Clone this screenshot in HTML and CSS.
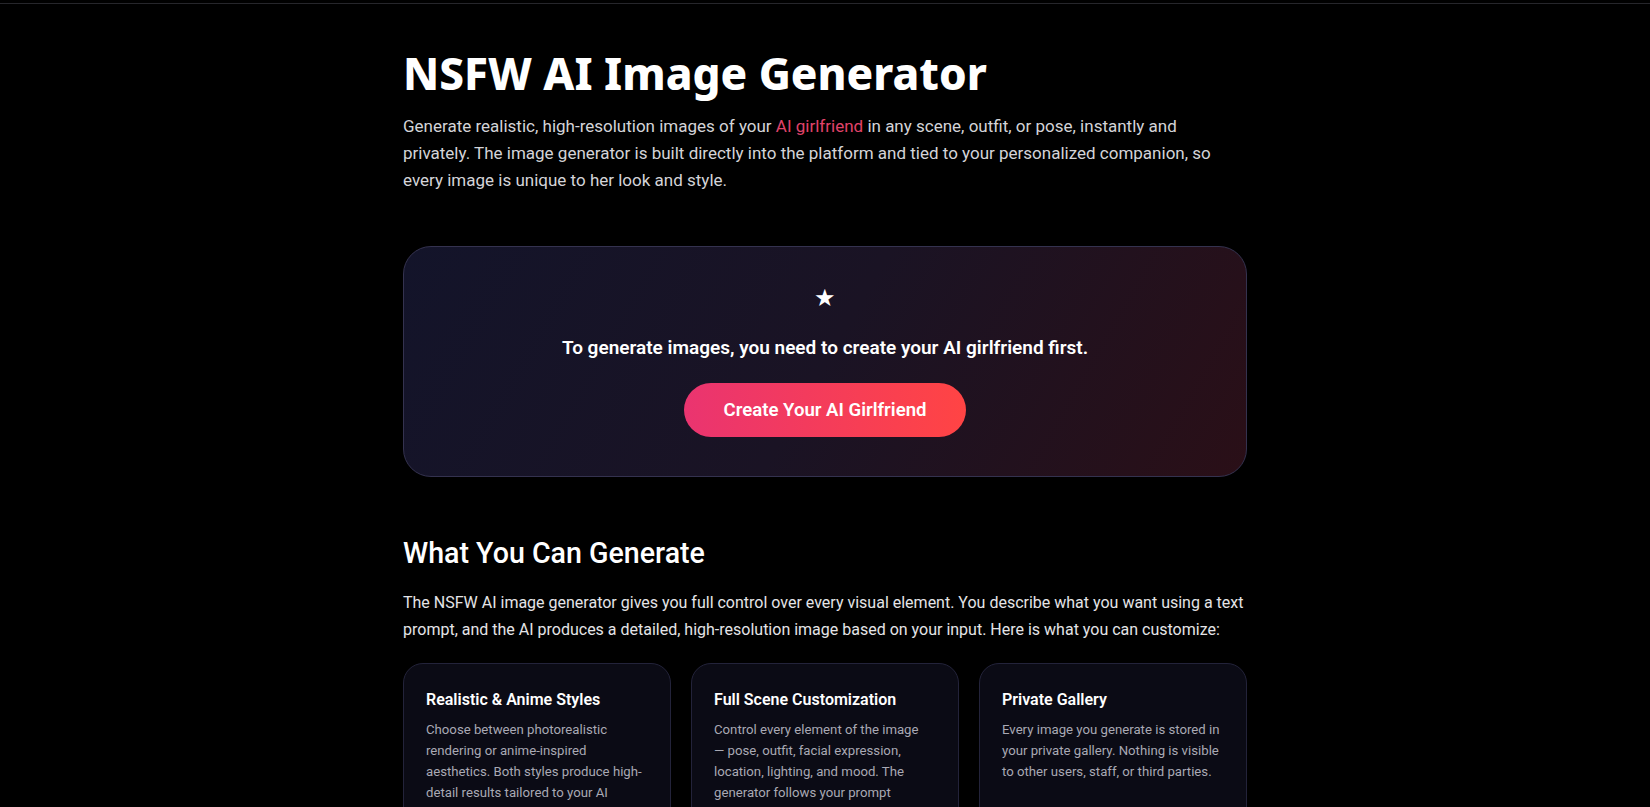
FILE: index.html
```html
<!DOCTYPE html>
<html lang="en">
<head>
<meta charset="utf-8">
<title>NSFW AI Image Generator</title>
<link rel="stylesheet" href="styles.css">
</head>
<body>
<div class="topbar"></div>
<main class="page">
  <h1 class="title">NSFW AI Image Generator</h1>
  <p class="lead">Generate realistic, high-resolution images of your <a href="#" class="accent">AI girlfriend</a> in any scene, outfit, or pose, instantly and privately. The image generator is built directly into the platform and tied to your personalized companion, so every image is unique to her look and style.</p>

  <section class="cta">
    <div class="cta-star">&#9733;</div>
    <p class="cta-text">To generate images, you need to create your AI girlfriend first.</p>
    <a href="#" class="cta-btn">Create Your AI Girlfriend</a>
  </section>

  <h2 class="section-title">What You Can Generate</h2>
  <p class="section-text">The NSFW AI image generator gives you full control over every visual element. You describe what you want using a text prompt, and the AI produces a detailed, high-resolution image based on your input. Here is what you can customize:</p>

  <div class="features">
    <div class="feature">
      <h3 class="feature-title">Realistic &amp; Anime Styles</h3>
      <p class="feature-text">Choose between photorealistic rendering or anime-inspired aesthetics. Both styles produce high-detail results tailored to your AI girlfriend's unique appearance.</p>
    </div>
    <div class="feature">
      <h3 class="feature-title">Full Scene Customization</h3>
      <p class="feature-text">Control every element of the image —&nbsp;pose, outfit, facial expression, location, lighting, and mood. The generator follows your prompt closely to deliver exactly what you describe.</p>
    </div>
    <div class="feature">
      <h3 class="feature-title">Private Gallery</h3>
      <p class="feature-text">Every image you generate is stored in your private gallery. Nothing is visible to other users, staff, or third parties.</p>
    </div>
  </div>
</main>
</body>
</html>
```

FILE: styles.css
```css
* { box-sizing: border-box; }
html, body { margin: 0; padding: 0; background: #000; }
body {
  font-family: Roboto, "Noto Sans", sans-serif;
  color: #e4e4e7;
  overflow: hidden;
}
.topbar {
  height: 4px;
  border-bottom: 1px solid #26262b;
}
.page {
  width: 844px;
  margin: 0 auto;
  padding-top: 40px;
}
.title {
  margin: 0;
  font-family: "Noto Sans", Roboto, sans-serif;
  font-size: 44px;
  font-weight: 800;
  line-height: 58px;
  color: #fff;
}
.lead {
  margin: 11px 0 0;
  font-size: 17px;
  line-height: 27px;
  color: #d4d4d8;
}
.accent { color: #e0436a; text-decoration: none; }
.cta {
  margin-top: 52px;
  height: 231px;
  border: 1px solid #34324f;
  border-radius: 28px;
  background: linear-gradient(120deg, #13142a 0%, #1a1324 50%, #2a0f17 100%);
  display: flex;
  flex-direction: column;
  align-items: center;
  padding-top: 37px;
}
.cta-star {
  font-size: 24px;
  line-height: 28px;
  color: #fff;
}
.cta-text {
  margin: 22px 0 0;
  font-size: 19px;
  font-weight: 600;
  color: #fff;
  line-height: 28px;
}
.cta-btn {
  margin-top: 21px;
  display: inline-flex;
  align-items: center;
  justify-content: center;
  width: 282px;
  height: 54px;
  border-radius: 27px;
  background: linear-gradient(90deg, #ea3470 0%, #ff4444 100%);
  color: #fff;
  font-size: 18.6px;
  font-weight: 600;
  text-decoration: none;
}
.section-title {
  margin: 56px 0 0;
  font-size: 28.6px;
  font-weight: 500;
  line-height: 40px;
  color: #fff;
}
.section-text {
  margin: 16px 0 0;
  font-size: 16px;
  line-height: 27px;
  color: #e4e4e7;
}
.features {
  margin-top: 20px;
  display: grid;
  grid-template-columns: repeat(3, 1fr);
  gap: 20px;
}
.feature {
  border: 1px solid #23233a;
  border-radius: 20px;
  background: #0b0b15;
  padding: 24px 26px 24px 22px;
  height: 220px;
}
.feature-title {
  margin: 0;
  font-size: 16px;
  font-weight: 600;
  line-height: 24px;
  color: #fff;
}
.feature-text {
  margin: 7px 0 0;
  font-size: 13.2px;
  line-height: 21px;
  color: #a9a9b4;
}
```
